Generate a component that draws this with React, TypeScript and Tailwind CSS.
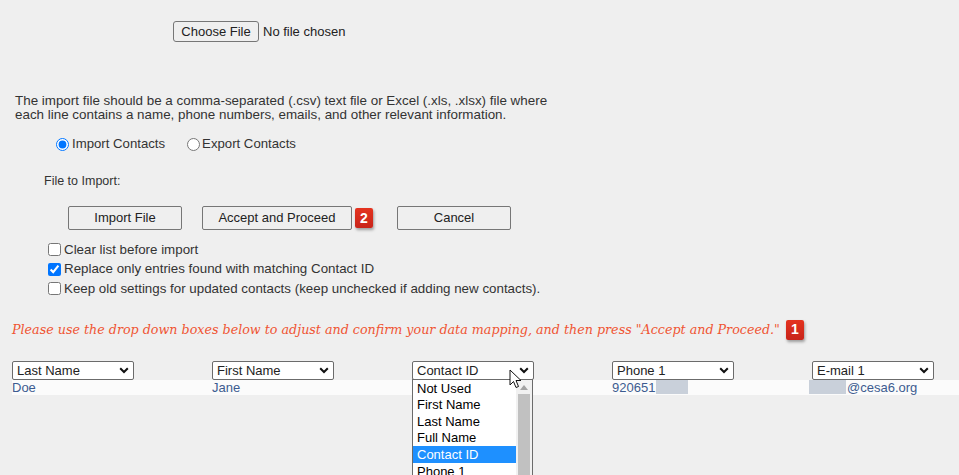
import React from "react";

const FIELDS = [
  { label: "Last Name", value: "Doe" },
  { label: "First Name", value: "Jane" },
  { label: "Contact ID", value: "" },
  { label: "Phone 1", value: "920651" },
  { label: "E-mail 1", value: "@cesa6.org" },
];

const OPTIONS = ["Not Used", "First Name", "Last Name", "Full Name", "Contact ID", "Phone 1"];

function Chevron() {
  return (
    <svg width="10" height="7" viewBox="0 0 10 7" className="shrink-0">
      <path d="M1.2 1.2 L5 5 L8.8 1.2" fill="none" stroke="#111" strokeWidth="2" />
    </svg>
  );
}

function FakeSelect({ label }: { label: string }) {
  return (
    <div className="flex h-[19px] w-[122px] items-center justify-between rounded-[2px] border border-[#6b6b6b] bg-white pl-[4px] pr-[4px] text-[13px] text-[#222]">
      <span className="leading-none">{label}</span>
      <Chevron />
    </div>
  );
}

function Badge({ n }: { n: string }) {
  return (
    <span className="flex h-[20px] w-[18px] items-center justify-center rounded-[2px] bg-gradient-to-b from-[#e4331f] to-[#c8241a] text-[14px] font-bold text-white shadow-[1px_2px_3px_rgba(0,0,0,0.35)]">
      {n}
    </span>
  );
}

function Btn({ children, w }: { children: React.ReactNode; w: string }) {
  return (
    <div className={`flex h-[24px] items-center justify-center rounded-[2px] border border-[#767676] bg-[#efefef] text-[13px] text-[#222] ${w}`}>
      {children}
    </div>
  );
}

function Cursor() {
  return (
    <svg width="14" height="21" viewBox="0 0 14 21">
      <path
        d="M1 1 L1 16 L4.5 12.5 L7 18.5 L9.5 17.5 L7 11.5 L12 11.5 Z"
        fill="#fff"
        stroke="#111"
        strokeWidth="1"
        strokeLinejoin="round"
      />
    </svg>
  );
}

export default function App() {
  return (
    <div className="relative h-[475px] w-[959px] overflow-hidden bg-[#efefef] font-['Liberation_Sans',Arial,sans-serif] text-[#333]">
      {/* file picker */}
      <div className="mt-[21px] flex h-[21px] items-center pl-[173px] text-[13px] text-[#222]">
        <div className="flex h-[21px] w-[86px] items-center justify-center rounded-[3px] border border-[#767676] bg-[#efefef]">
          Choose File
        </div>
        <span className="ml-[4px]">No file chosen</span>
      </div>

      <p className="mt-[52px] w-[552px] pl-[15px] text-[13.4px] leading-[14px]">
        The import file should be a comma-separated (.csv) text file or Excel (.xls, .xlsx) file where each line contains a name, phone numbers, emails, and other relevant information.
      </p>

      <div className="mt-[14px] flex h-[16px] items-center pl-[56px] text-[13.2px]">
        <label className="flex items-center gap-[3px]">
          <input type="radio" name="mode" defaultChecked className="m-0 h-[13px] w-[13px] accent-[#0075ff]" />
          Import Contacts
        </label>
        <label className="ml-[22px] flex items-center gap-[2px]">
          <input type="radio" name="mode" className="m-0 h-[13px] w-[13px]" />
          Export Contacts
        </label>
      </div>

      <div className="mt-[21px] flex h-[16px] items-center pl-[44px] text-[12.5px]">File to Import:</div>

      <div className="mt-[17px] flex items-center pl-[68px]">
        <Btn w="w-[114px]">Import File</Btn>
        <div className="ml-[20px]">
          <Btn w="w-[150px]">Accept and Proceed</Btn>
        </div>
        <div className="ml-[3px]">
          <Badge n="2" />
        </div>
        <div className="ml-[24px]">
          <Btn w="w-[114px]">Cancel</Btn>
        </div>
      </div>

      <div className="mt-[10px] flex flex-col pl-[48px] text-[13.35px]">
        {[
          { t: "Clear list before import", c: false },
          { t: "Replace only entries found with matching Contact ID", c: true },
          { t: "Keep old settings for updated contacts (keep unchecked if adding new contacts).", c: false },
        ].map((r) => (
          <label key={r.t} className="flex h-[19.5px] items-center gap-[3px]">
            <input type="checkbox" defaultChecked={r.c} className="m-0 h-[13px] w-[13px] accent-[#0075ff]" />
            {r.t}
          </label>
        ))}
      </div>

      <div className="mt-[21px] flex h-[20px] items-center pl-[12px]">
        <span className="font-['DejaVu_Serif',Georgia,serif] text-[12.7px] italic text-[#ef5533]">
          Please use the drop down boxes below to adjust and confirm your data mapping, and then press "Accept and Proceed."
        </span>
        <div className="ml-[6px]">
          <Badge n="1" />
        </div>
      </div>

      {/* mapping selects */}
      <div className="mt-[21px] grid grid-cols-[200px_200px_200px_200px_1fr] pl-[12px]">
        {FIELDS.map((f) => (
          <FakeSelect key={f.label} label={f.label} />
        ))}
      </div>
      <div className="ml-[12px] grid h-[15px] grid-cols-[200px_200px_200px_200px_1fr] items-center bg-[#fbfbfb] text-[13px] leading-none text-[#3d5b90]">
        <span>Doe</span>
        <span>Jane</span>
        <span />
        <span className="flex items-center">
          920651
          <span className="ml-[1px] inline-block h-[14px] w-[32px] bg-[#c9d0da]" />
        </span>
        <span className="flex items-center">
          <span className="-ml-[3px] mr-[1px] inline-block h-[14px] w-[37px] bg-[#c9d0da]" />
          @cesa6.org
        </span>
      </div>

      {/* open dropdown list */}
      <div className="absolute left-[412px] top-[379px] w-[121px] border border-[#6b6b6b] bg-white">
        <div className="flex">
          <div className="flex-1 text-[13px] text-black">
            {OPTIONS.map((o) => (
              <div
                key={o}
                className={`flex h-[16.6px] items-center pl-[4px] ${o === "Contact ID" ? "bg-[#1e90ff] text-white" : ""}`}
              >
                {o}
              </div>
            ))}
          </div>
          <div className="flex w-[16px] flex-col items-center bg-[#f1f1f1]">
            <svg width="8" height="5" viewBox="0 0 8 5" className="mt-[5px]">
              <path d="M0 5 L4 0 L8 5 Z" fill="#a3a3a3" />
            </svg>
            <div className="mt-[4px] h-[120px] w-[12px] bg-[#c1c1c1]" />
          </div>
        </div>
      </div>

      <div className="absolute left-[509px] top-[369px]">
        <Cursor />
      </div>
    </div>
  );
}
